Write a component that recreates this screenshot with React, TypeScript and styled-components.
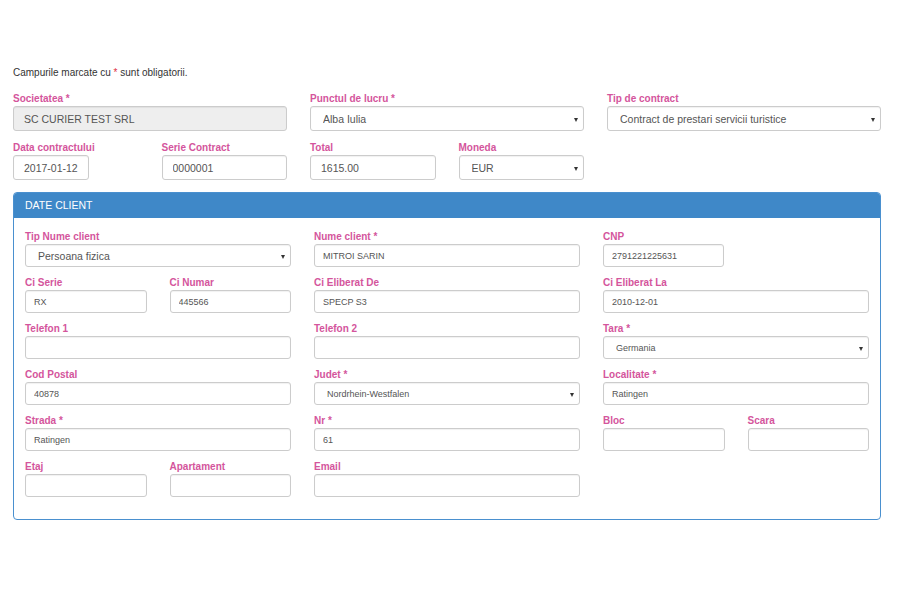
import React from "react";
import styled, { createGlobalStyle } from "styled-components";

const GlobalStyle = createGlobalStyle`
    html, body {
        margin: 0;
        padding: 0;
        background: #fff;
        font-family: "Liberation Sans", Arial, sans-serif;
    }
`;

type FieldDef = {
    label: string;
    value?: string;
    required?: boolean;
    select?: boolean;
    width?: number;
    disabled?: boolean;
    small?: boolean;
    bigText?: boolean;
};

const Field: React.FC<FieldDef> = ({ label, value = "", required, select, width, disabled, small, bigText }) => (
    <FieldBox $small={small}>
        <Label>
            {label}
            {required && " *"}
        </Label>
        {select ? (
            <SelectWrap>
                <Select $small={small} $bigText={bigText} defaultValue={value}>
                    <option value={value}>{value}</option>
                </Select>
                <Caret />
            </SelectWrap>
        ) : (
            <Input
                $small={small}
                defaultValue={value}
                disabled={disabled}
                style={width ? { width } : undefined}
            />
        )}
    </FieldBox>
);

export default function App() {
    return (
        <Page>
            <GlobalStyle />
            <Note>
                Campurile marcate cu <Star>*</Star> sunt obligatorii.
            </Note>

            <Row>
                <Field label="Societatea" required value="SC CURIER TEST SRL" disabled />
                <Field label="Punctul de lucru" required select value="Alba Iulia" />
                <Field label="Tip de contract" select value="Contract de prestari servicii turistice" />
            </Row>
            <Row>
                <Half>
                    <Field label="Data contractului" value="2017-01-12" width={76} />
                    <Field label="Serie Contract" value="0000001" />
                </Half>
                <Half>
                    <Field label="Total" value="1615.00" />
                    <Field label="Moneda" select value="EUR" />
                </Half>
            </Row>

            <Panel>
                <PanelHeader>DATE CLIENT</PanelHeader>
                <PanelBody>
                    <Row>
                        <Field small bigText label="Tip Nume client" select value="Persoana fizica" />
                        <Field small label="Nume client" required value="MITROI SARIN" />
                        <Field small label="CNP" value="2791221225631" width={121} />
                    </Row>
                    <Row>
                        <Half>
                            <Field small label="Ci Serie" value="RX" />
                            <Field small label="Ci Numar" value="445566" />
                        </Half>
                        <Field small label="Ci Eliberat De" value="SPECP S3" />
                        <Field small label="Ci Eliberat La" value="2010-12-01" />
                    </Row>
                    <Row>
                        <Field small label="Telefon 1" />
                        <Field small label="Telefon 2" />
                        <Field small label="Tara" required select value="Germania" />
                    </Row>
                    <Row>
                        <Field small label="Cod Postal" value="40878" />
                        <Field small label="Judet" required select value="Nordrhein-Westfalen" />
                        <Field small label="Localitate" required value="Ratingen" />
                    </Row>
                    <Row>
                        <Field small label="Strada" required value="Ratingen" />
                        <Field small label="Nr" required value="61" />
                        <Half>
                            <Field small label="Bloc" />
                            <Field small label="Scara" />
                        </Half>
                    </Row>
                    <Row>
                        <Half>
                            <Field small label="Etaj" />
                            <Field small label="Apartament" />
                        </Half>
                        <Field small label="Email" />
                        <div />
                    </Row>
                </PanelBody>
            </Panel>
        </Page>
    );
}

const Page = styled.div`
    width: 868px;
    padding: 66px 0 0 13px;
`;

const Note = styled.div`
    font-size: 10px;
    line-height: 14px;
    color: #333;
    margin-bottom: 13px;
`;

const Star = styled.span`
    color: #e0303f;
`;

const Row = styled.div`
    display: grid;
    grid-template-columns: repeat(3, 1fr);
    column-gap: 23px;
`;

const Half = styled.div`
    display: grid;
    grid-template-columns: 1fr 1fr;
    column-gap: 23px;
`;

const FieldBox = styled.div<{ $small?: boolean }>`
    display: flex;
    flex-direction: column;
    align-items: flex-start;
    margin-bottom: ${p => (p.$small ? "10px" : "11px")};
`;

const Label = styled.label`
    font-size: 10px;
    line-height: 12px;
    font-weight: bold;
    color: #d4559c;
    margin-bottom: 1px;
    white-space: nowrap;
`;

const Input = styled.input<{ $small?: boolean }>`
    box-sizing: border-box;
    width: 100%;
    height: ${p => (p.$small ? "23px" : "25px")};
    padding: 0 ${p => (p.$small ? "8px" : "10px")};
    font-family: "Liberation Sans", Arial, sans-serif;
    font-size: ${p => (p.$small ? "9px" : "10.5px")};
    color: #555;
    background: #fff;
    border: 1px solid #ccc;
    border-radius: 3px;
    box-shadow: inset 0 1px 1px rgba(0, 0, 0, 0.06);
    outline: none;

    &:disabled {
        background: #eee;
        color: #555;
        -webkit-text-fill-color: #555;
        opacity: 1;
    }
`;

const SelectWrap = styled.div`
    position: relative;
    width: 100%;
`;

const Select = styled.select<{ $small?: boolean; $bigText?: boolean }>`
    box-sizing: border-box;
    width: 100%;
    height: ${p => (p.$small ? "23px" : "25px")};
    padding: 0 20px 0 12px;
    font-family: "Liberation Sans", Arial, sans-serif;
    font-size: ${p => (p.$small && !p.$bigText ? "9px" : "10.5px")};
    color: #555;
    background: #fff;
    border: 1px solid #ccc;
    border-radius: 3px;
    box-shadow: inset 0 1px 1px rgba(0, 0, 0, 0.06);
    appearance: none;
    -webkit-appearance: none;
    outline: none;
`;

const Caret = styled.span`
    position: absolute;
    right: 6px;
    top: 50%;
    margin-top: -1px;
    width: 0;
    height: 0;
    border-left: 2.5px solid transparent;
    border-right: 2.5px solid transparent;
    border-top: 4px solid #333;
    pointer-events: none;
`;

const Panel = styled.div`
    margin-top: 1px;
    border: 1px solid #4a90cf;
    border-radius: 4px;
    overflow: hidden;
`;

const PanelHeader = styled.div`
    background: #3f88c8;
    color: #fff;
    font-size: 10.5px;
    line-height: 25px;
    padding: 0 11px;
`;

const PanelBody = styled.div`
    padding: 13px 11px 12px;
`;
